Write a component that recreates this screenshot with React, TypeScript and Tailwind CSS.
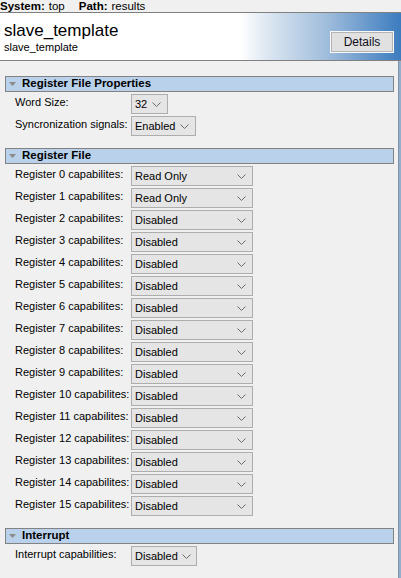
import React from "react";

const Chevron = () => (
  <svg width="9" height="5" viewBox="0 0 9 5" className="shrink-0">
    <polyline points="0.5,0.5 4.5,4.5 8.5,0.5" fill="none" stroke="#6a6a6a" strokeWidth="1" />
  </svg>
);

function Select({ value, width }: { value: string; width: string }) {
  return (
    <div
      className={`${width} h-[20px] shrink-0 flex items-center justify-between gap-[4px] border border-[#adadad] bg-[#e5e5e5] pl-[3px] pr-[6px] text-[11px] text-black whitespace-nowrap`}
    >
      <span>{value}</span>
      <Chevron />
    </div>
  );
}

function SectionHeader({ title }: { title: string }) {
  return (
    <div className="h-[16px] flex items-center border border-[#828282] bg-[#b9d1ea]">
      <svg width="7" height="4" viewBox="0 0 7 4" className="ml-[3px] mr-[6px]">
        <polygon points="0,0 7,0 3.5,4" fill="#8a8a8a" />
      </svg>
      <span className="font-bold text-[11.5px] leading-none text-black">{title}</span>
    </div>
  );
}

function Row({ label, value, width }: { label: string; value: string; width: string }) {
  return (
    <div className="flex items-center h-[20px]">
      <div className="w-[126px] shrink-0 pl-[10px] text-[11px] leading-[13px] text-black whitespace-nowrap -mt-[3px]">
        {label}
      </div>
      <Select value={value} width={width} />
    </div>
  );
}

export default function App() {
  const regs = Array.from({ length: 16 }, (_, i) => ({
    label: `Register ${i} capabilites:`,
    value: i < 2 ? "Read Only" : "Disabled",
  }));
  return (
    <div
      className="w-[401px] h-[578px] bg-[#f0f0f0] flex flex-col overflow-hidden"
      style={{ fontFamily: '"Liberation Sans", Arial, sans-serif' }}
    >
      {/* top bar */}
      <div className="h-[13px] border-b border-[#808080] flex items-center text-[11.5px] leading-[12px] text-black whitespace-nowrap">
        <span className="font-bold">System:</span>
        <span className="ml-[4px]">top</span>
        <span className="font-bold ml-[14px]">Path:</span>
        <span className="ml-[4px]">results</span>
      </div>
      {/* header */}
      <div className="h-[48px] border-b border-[#808080] flex items-start justify-between bg-[linear-gradient(to_right,#ffffff_0%,#ffffff_60%,#dbe6f1_67%,#9dbbdb_82%,#3c7cbf_100%)]">
        <div className="pl-[4px] pt-[8px] flex flex-col">
          <span className="text-[17px] leading-[19px] text-black">slave_template</span>
          <span className="text-[11px] leading-[12px] text-black mt-[1px]">slave_template</span>
        </div>
        <div className="mt-[18px] mr-[7px] border border-[#f8f8f8]">
          <div className="w-[62px] h-[20px] border border-[#b4b4b4] bg-[#e1e1e1] flex items-center justify-center text-[12px] text-[#101020]">
            Details
          </div>
        </div>
      </div>
      {/* body */}
      <div className="flex-1 flex">
        <div className="flex-1 pl-[5px] pr-[4px] pt-[15px] flex flex-col">
          <SectionHeader title="Register File Properties" />
          <div className="flex flex-col gap-[2px] mt-[2px]">
            <Row label="Word Size:" value="32" width="w-[37px]" />
            <Row label="Syncronization signals:" value="Enabled" width="w-[65px]" />
          </div>
          <div className="mt-[12px]">
            <SectionHeader title="Register File" />
          </div>
          <div className="flex flex-col gap-[2px] mt-[2px]">
            {regs.map((r) => (
              <Row key={r.label} label={r.label} value={r.value} width="w-[122px]" />
            ))}
          </div>
          <div className="mt-[12px]">
            <SectionHeader title="Interrupt" />
          </div>
          <div className="flex flex-col gap-[2px] mt-[2px]">
            <Row label="Interrupt capabilities:" value="Disabled" width="w-[66px]" />
          </div>
        </div>
        <div className="w-[3px] border-l border-[#7f93ab] bg-[#94afcc]" />
      </div>
    </div>
  );
}
